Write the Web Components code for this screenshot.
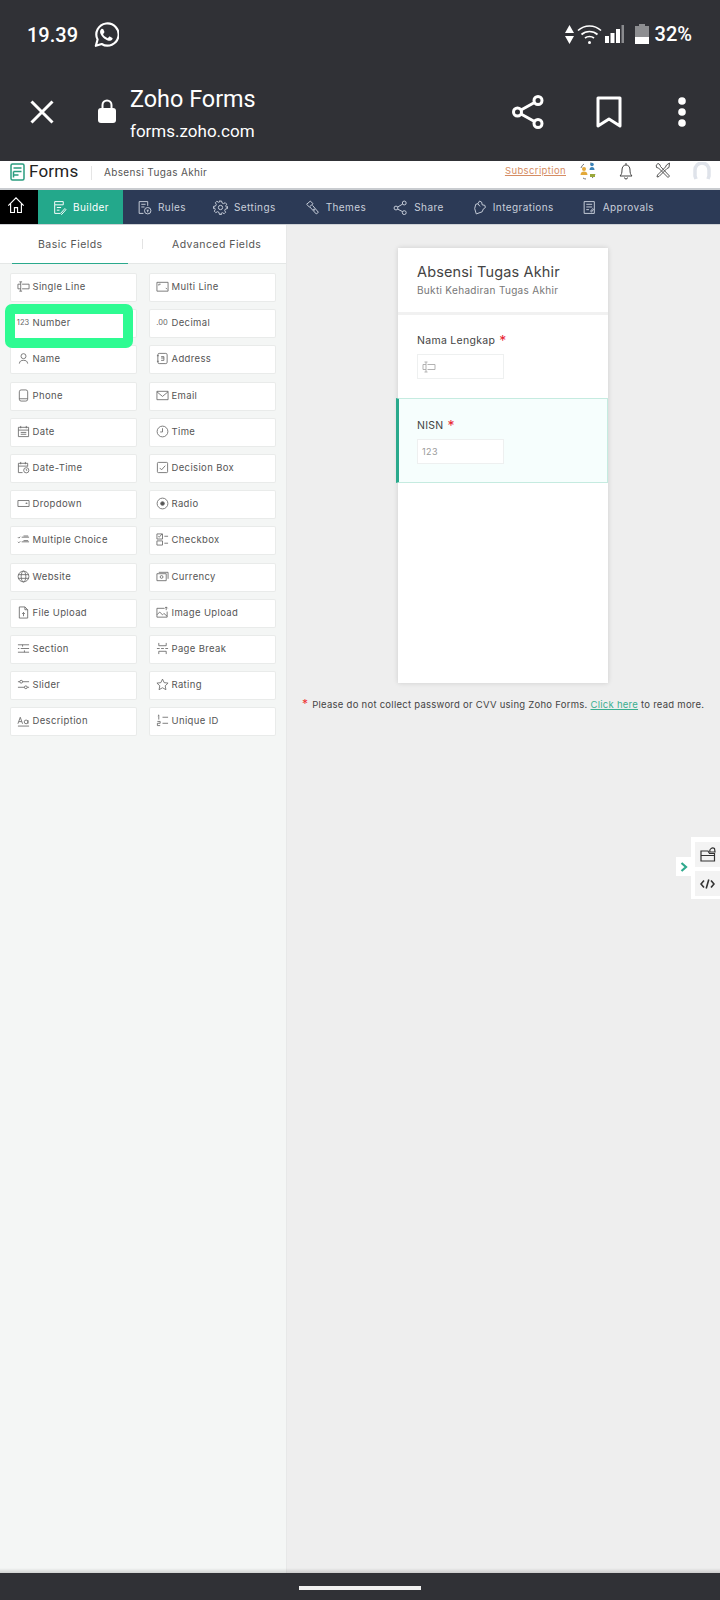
<!DOCTYPE html>
<html>
<head>
<meta charset="utf-8">
<title>Zoho Forms</title>
<style>
  html, body { margin: 0; padding: 0; }
  body {
    width: 720px; height: 1600px; overflow: hidden;
    display: flex; flex-direction: column;
    font-family: Inter, "Liberation Sans", sans-serif;
  }
</style>
</head>
<body>
  <browser-bar></browser-bar>
  <app-header></app-header>
  <app-nav>
    <nav-item icon="home" home></nav-item>
    <nav-item icon="builder" active>Builder</nav-item>
    <nav-item icon="rules">Rules</nav-item>
    <nav-item icon="settings">Settings</nav-item>
    <nav-item icon="themes">Themes</nav-item>
    <nav-item icon="share">Share</nav-item>
    <nav-item icon="integrations">Integrations</nav-item>
    <nav-item icon="approvals">Approvals</nav-item>
  </app-nav>
  <main-area>
    <field-panel>
      <field-tile icon="single">Single Line</field-tile>
      <field-tile icon="multi">Multi Line</field-tile>
      <field-tile icon="number" marked>Number</field-tile>
      <field-tile icon="decimal">Decimal</field-tile>
      <field-tile icon="name">Name</field-tile>
      <field-tile icon="address">Address</field-tile>
      <field-tile icon="phone">Phone</field-tile>
      <field-tile icon="email">Email</field-tile>
      <field-tile icon="date">Date</field-tile>
      <field-tile icon="time">Time</field-tile>
      <field-tile icon="datetime">Date-Time</field-tile>
      <field-tile icon="decision">Decision Box</field-tile>
      <field-tile icon="dropdown">Dropdown</field-tile>
      <field-tile icon="radio">Radio</field-tile>
      <field-tile icon="choice">Multiple Choice</field-tile>
      <field-tile icon="checkbox">Checkbox</field-tile>
      <field-tile icon="website">Website</field-tile>
      <field-tile icon="currency">Currency</field-tile>
      <field-tile icon="file">File Upload</field-tile>
      <field-tile icon="image">Image Upload</field-tile>
      <field-tile icon="section">Section</field-tile>
      <field-tile icon="pagebreak">Page Break</field-tile>
      <field-tile icon="slider">Slider</field-tile>
      <field-tile icon="rating">Rating</field-tile>
      <field-tile icon="description">Description</field-tile>
      <field-tile icon="unique">Unique ID</field-tile>
    </field-panel>
    <form-canvas>
      <form-field label="Nama Lengkap" icon="single"></form-field>
      <form-field label="NISN" icon="number" active></form-field>
    </form-canvas>
  </main-area>
  <home-bar></home-bar>

<script>
// 字段图标，全部 14x14 的线条图
const ICONS = {
  home: '<path d="M1 7.500 7 1.500l6 6M2.800 6v6.800h3V9h2.400v3.800h3V6"/>',
  builder: '<path d="M2.500 1.500h8v3h-8zM2.500 4.500v8h5M4.500 7h4M4.500 9.500h2.500M8 12.500l4-4.500 1 1-4 4.500z"/>',
  rules: '<path d="M2 1.500h8v4M2 1.500v11h4M4 4h4M4 6.500h3"/><circle cx="10" cy="10" r="3"/><path d="M9 9.500h2M10 9.500v2"/>',
  settings: '<circle cx="7" cy="7" r="2"/><path d="M6 1h2l.4 1.700 1.500.7 1.500-.9 1.400 1.400-.9 1.500.7 1.500L13.500 6v2l-1.900.4-.7 1.500.9 1.500-1.400 1.400-1.500-.9-1.500.7L8 13.500H6l-.4-1.900-1.500-.7-1.500.9-1.400-1.400.9-1.500-.7-1.500L.5 8V6l1.900-.4.7-1.500-.9-1.500 1.400-1.400 1.500.9 1.500-.7z"/>',
  themes: '<path d="M1.500 4 5 1l2.500 2.500-3.500 3zM4.500 6.500l6 6.500 2-1.500-5.500-6.500"/><circle cx="8.500" cy="9" r=".6"/>',
  share: '<circle cx="10.500" cy="2.800" r="1.800"/><circle cx="2.800" cy="7.500" r="1.800"/><circle cx="10.500" cy="11.800" r="1.800"/><path d="M9 3.800 4.300 6.600M4.300 8.500 9 10.900"/>',
  integrations: '<path d="M4 13 2.500 8l1-4 2-.5L7 1l2 1 .5 2.500L12 5l.5 2-2 1.500-1 2.500z"/><path d="M5.500 3.500 7.500 6"/>',
  approvals: '<path d="M2 1.500h9.500v11H2zM4 4h5.500M4 6.500h5.500M4 9h2.500M8 10.500l2-2.500.8.800-2 2.500z"/>',
  single: '<path d="M4 2v10M2.500 2h3M2.500 12h3M4 4.500H1v5h3M5.500 4.500H13v5H5.500"/>',
  multi: '<path d="M1 2.500h12v9.500H1zM3 4.500v1.500M3 4.500h2M10.500 8.500l1.500 1.500"/>',
  decimal: '',
  name: '<circle cx="7" cy="4.500" r="2.700"/><path d="M2.500 12.500c.5-3 2-3.500 4.500-3.500s4 .5 4.500 3.500"/>',
  address: '<rect x="2" y="1.500" width="10" height="11" rx="1.500"/><path d="M1 4h2M1 10h2M5.500 5h3v1.500h-3M8.500 6.500V9h-3"/>',
  phone: '<rect x="2.500" y="1" width="9" height="12" rx="2"/><path d="M2.500 10.500h9"/>',
  email: '<path d="M1 2.500h12v9H1zM1 3l6 5 6-5"/>',
  date: '<path d="M1.500 2.500h11v10h-11zM1.500 5.500h11M4 1v2.500M10 1v2.500M4 8h6M4 10h6"/>',
  time: '<circle cx="7" cy="7" r="5.800"/><path d="M7 3.500V7.500H4.500"/>',
  datetime: '<path d="M6 12.500H1.500v-10h10V6M1.500 5.500h10M4 1v2.500M9 1v2.500"/><circle cx="10" cy="10" r="2.800"/><path d="M10 8.700V10h1"/>',
  decision: '<rect x="1.500" y="1.500" width="11" height="11" rx="1"/><path d="M4 7.500l2 2 4-4.500"/>',
  dropdown: '<path d="M1 3.800h12v6.400H1zM9.500 6.500h1.500L10.250 7.500z"/>',
  radio: '<circle cx="7" cy="7" r="5.800"/><circle cx="7" cy="7" r="2" fill="#555"/>',
  choice: '<path d="M1 4.500l1 1 1.500-1.500M1 9.500l1 1 1.500-1.500M5 4.500h8M5 9.500h8M7 3.200h5M7 8.200h5"/>',
  checkbox: '<path d="M1 1h6v5.500H1zM2.500 3.500l1 1 3-3.500M1 8.500h6V13H1zM9 3.500h4M9 11h4"/>',
  website: '<circle cx="7" cy="7" r="5.800"/><ellipse cx="7" cy="7" rx="2.500" ry="5.800"/><path d="M1.200 5h11.600M1.200 9h11.600"/>',
  currency: '<path d="M1 4h10v7.500H1zM3 2.500h10v7"/><circle cx="6" cy="7.500" r="1.500"/>',
  file: '<path d="M2.500 1h6l3 3v9h-9zM8.500 1v3h3M7 11V7M5.500 8.500 7 7l1.500 1.500"/>',
  image: '<path d="M9 2.500H1v9.500h11V6M1 9.500 4 6.500l3 3 1.500-1.500 3.500 3M11 1v3.500M9.500 2.500 11 1l1.500 1.500"/>',
  section: '<path d="M1 3h12M4 7h9M1 7h1.500M1 11h12M6 3v2M8 9v2"/>',
  pagebreak: '<path d="M3 1v3h8V1M3 13v-3h8v3M1 7h3M5.500 7h3M10 7h3"/>',
  slider: '<path d="M1 4h12M1 10h12"/><circle cx="4.500" cy="4" r="1.500" fill="#fff"/><circle cx="9.500" cy="10" r="1.500" fill="#fff"/>',
  rating: '<path d="M7 1.200l1.800 3.800 4.200.5-3.100 2.900.8 4.200L7 10.500l-3.700 2.100.8-4.200L1 5.500 5.200 5z"/>',
  description: '<path d="M1 13h12M1 10.500 3.500 3.500 6 10.500M2 8.200h3"/><circle cx="9.800" cy="8.500" r="2"/><path d="M11.800 6.500v4"/>',
  unique: '<path d="M3 1v5M2 2l1-1M1.500 8h3v2h-3v2.500h3M7 3.500h6M7 10h6"/>',
}
const TEXT_ICONS = { number: '123', decimal: '.00' }

function iconMarkup(name, size = 14) {
  if (TEXT_ICONS[name]) return `<span class="txt-icon">${TEXT_ICONS[name]}</span>`
  return `<svg width="${size}" height="${size}" viewBox="0 0 14 14" fill="none" stroke="currentColor" stroke-width=".9">${ICONS[name] || ''}</svg>`
}

// 创建组件的小工具：把样式和结构写进 open 的影子根
function shadow(el, html) {
  el.attachShadow({ mode: 'open' })
  el.shadowRoot.innerHTML = html
}

class BrowserBar extends HTMLElement {
  constructor() {
    super()
    shadow(this, `
    <style>
      :host { display: block; height: 161px; background: #303136; color: #fff; font-family: Roboto, sans-serif; }
      .status { height: 68px; display: flex; align-items: center; padding: 0 28px 0 27px; font-size: 20px; font-weight: 500; box-sizing: border-box; }
      .time { margin: 1px 15px 0 0; }
      .spacer { flex: 1; }
      .st { display: flex; align-items: center; }
      .url { height: 93px; display: flex; align-items: flex-start; }
      .close { margin: 32px 0 0 30px; width: 24px; height: 24px; }
      .lock { margin: 31px 0 0 43px; }
      .title { margin: 16px 0 0 13px; width: 300px; }
      .title b { display: block; font-weight: 400; font-size: 23.400px; line-height: 30px; }
      .title span { display: block; font-size: 17px; line-height: 22px; margin-top: 6px; }
      .sh { margin: 26px 0 0 0; position: absolute; left: 511px; }
      .bm { position: absolute; left: 596px; margin-top: 28px; }
      .dots { position: absolute; left: 677px; margin-top: 29px; }
    </style>
    <div class="status">
      <span class="time">19.39</span>
      <svg width="26" height="27" viewBox="0 0 24 25" fill="none">
        <path d="M2.600 23l1.600-5.800A10.300 10.300 0 1 1 8 21.300z" stroke="#fff" stroke-width="2" stroke-linejoin="round"/>
        <path fill="#fff" d="M8.500 7.200c-.3 0-.7.1-1 .5-.4.500-1 1.200-1 2.600s1 2.800 1.200 3c.1.200 2 3.100 4.900 4.300 2.400 1 2.900.800 3.400.700.500 0 1.700-.700 1.900-1.300.2-.700.2-1.200.2-1.300-.1-.1-.3-.2-.6-.3l-2-1c-.3-.1-.5-.1-.7.200l-.9 1.100c-.2.200-.3.200-.6.100-.3-.2-1.200-.5-2.300-1.400-.9-.8-1.400-1.700-1.600-2-.2-.3 0-.5.100-.6l.7-.8c.1-.2.200-.3.300-.5 0-.2 0-.4 0-.5l-.9-2.200c-.2-.5-.5-.5-.7-.5z"/>
      </svg>
      <span class="spacer"></span>
      <span class="st">
        <svg width="9" height="19" viewBox="0 0 9 19" style="margin-right:3px"><path fill="#fff" d="M4.500 0 9 8H0zM0 11h9l-4.500 8z"/></svg>
        <svg width="25" height="24" viewBox="0 0 25 24" fill="none" stroke="#fff" stroke-width="1.700" style="margin-right:3px">
          <path d="M1 8.500c6.500-6 16.500-6 23 0M4.500 12.500c4.500-4 11.500-4 16 0M8 16c2.500-2 6.500-2 9 0"/>
          <circle cx="12.500" cy="20.500" r="1.500" fill="#fff" stroke="none"/>
        </svg>
        <svg width="20" height="20" viewBox="0 0 20 20" style="margin-right:10px">
          <path fill="#fff" d="M0 12h4v7H0zM5.500 9h4v10h-4zM11 5h4v14h-4z"/><path fill="#8a8b8e" d="M16.500 1H19v18h-2.500z"/>
        </svg>
        <svg width="14" height="20" viewBox="0 0 14 20" style="margin-right:6px">
          <path fill="#8d8e91" d="M4 0h6v2h4v12H0V2h4z"/><path fill="#fff" d="M0 13h14v7H0z"/>
        </svg>
        <span>32%</span>
      </span>
    </div>
    <div class="url">
      <svg class="close" viewBox="0 0 24 24" stroke="#fff" stroke-width="3"><path d="M1.500 1.500l21 21M22.500 1.500l-21 21"/></svg>
      <svg class="lock" width="20" height="24" viewBox="0 0 20 24" fill="none"><path d="M5.500 10V6a4.500 4.500 0 0 1 9 0v4" stroke="#fff" stroke-width="2"/><rect x="1" y="9" width="18" height="15" rx="3" fill="#fff"/></svg>
      <div class="title"><b>Zoho Forms</b><span>forms.zoho.com</span></div>
      <svg class="sh" width="34" height="36" viewBox="0 0 34 36" fill="none" stroke="#fff" stroke-width="3">
        <circle cx="27" cy="6.500" r="4"/><circle cx="6.500" cy="18" r="4"/><circle cx="27" cy="29.500" r="4"/>
        <path d="M23.500 8.500 10 16M10 20l13.500 7.500"/>
      </svg>
      <svg class="bm" width="26" height="33" viewBox="0 0 26 33" fill="none" stroke="#fff" stroke-width="3"><path d="M2 2h22v28l-11-7-11 7z" stroke-linejoin="round"/></svg>
      <svg class="dots" width="10" height="30" viewBox="0 0 10 30" fill="#fff"><circle cx="5" cy="4" r="3.800"/><circle cx="5" cy="15" r="3.800"/><circle cx="5" cy="26" r="3.800"/></svg>
    </div>`)
  }
}

class AppHeader extends HTMLElement {
  constructor() {
    super()
    shadow(this, `
    <style>
      :host { display: flex; align-items: center; height: 27px; background: #fff; border-bottom: 2px solid #c9ccd0; color: #333; position: relative; }
      .logo { margin: -6px 0 0 10px; }
      .brand { font-size: 17px; margin: -8px 0 0 4px; color: #222; font-family: Roboto, sans-serif; letter-spacing: .2px; width: 50px; }
      .sep { width: 1px; height: 14px; background: #e5e5e5; margin: -4px 0 0 12px; }
      .form { font-size: 10px; margin: -5px 0 0 12px; color: #555; letter-spacing: .35px; flex: 1; }
      .sub { font-size: 9.500px; color: #d58c63; text-decoration: underline; letter-spacing: .38px; margin: -8px 13px 0 0; }
      .ic { margin-top: -8px; }
    </style>
    <svg class="logo" width="15" height="18" viewBox="0 0 15 18" fill="none" stroke="#2a9d7f" stroke-width="1.500">
      <rect x="1" y="1" width="13" height="16" rx="1.500"/><path d="M3.500 5h8M3.500 8.500h8M3.500 8.500v6M3.500 12h5"/>
    </svg>
    <span class="brand">Forms</span>
    <span class="sep"></span>
    <span class="form">Absensi Tugas Akhir</span>
    <span class="sub">Subscription</span>
    <svg class="ic" width="18" height="20" viewBox="0 0 18 20" style="margin-right:22px" fill="none">
      <path d="M5 3a7 7 0 0 0-3 4M13 17a7 7 0 0 0 3-4M7 18c-1 0-2-.3-3-1M11 2c1 0 2 .3 3 1" stroke="#555" stroke-width=".8"/>
      <circle cx="5" cy="8" r="2" fill="#e3a93a"/><path d="M1.500 14c0-2.500 1.500-3.500 3.500-3.500s3.500 1 3.500 3.500z" fill="#e3a93a"/>
      <circle cx="13" cy="3.500" r="1.800" fill="#3b83b8"/><path d="M10.500 9c0-2 1-3 2.500-3s2.500 1 2.500 3z" fill="#3b83b8"/>
      <path d="M11 13h5v3h-5z" fill="#9aa83a"/>
    </svg>
    <svg class="ic" width="14" height="18" viewBox="0 0 14 18" style="margin-right:22px" fill="none" stroke="#444"><path d="M1 14h12c-1.500-1.500-2-3-2-6S9.500 3 7 3 3 5 3 8s-.5 4.500-2 6zM7 1v2M5.500 15.500a1.500 1.500 0 0 0 3 0"/></svg>
    <svg class="ic" width="16" height="17" viewBox="0 0 16 17" style="margin-right:21px" fill="none" stroke="#555"><path d="M3 1.500a3 3 0 0 0-1.500 4l2 .5L13 15.500 14.500 14 5.500 4.500 5 3a3 3 0 0 0-2-1.500zM14.500 1l-3 2-1 2-8 8-.5 2 2-.5 8-8 2-1z"/></svg>
    <svg class="ic" width="20" height="18" viewBox="0 0 20 18" style="margin-right:8px" fill="none" stroke="#dfe3ea" stroke-width="3.500"><path d="M4 17l-1-3V8a7 7 0 0 1 14 0v6l-1 3"/></svg>`)
  }
}

class AppNav extends HTMLElement {
  constructor() {
    super()
    shadow(this, `
    <style>
      :host { display: flex; height: 34px; background: #2c3a56; border-bottom: 1px solid #cfd2d6; }
    </style>
    <slot></slot>`)
  }
}

class NavItem extends HTMLElement {
  constructor() {
    super()
    const name = this.getAttribute('icon')
    shadow(this, `
    <style>
      :host { display: flex; align-items: center; gap: 6px; color: #c9cfdb; font-size: 10px; letter-spacing: .42px; }
      :host([home]) { background: #000; width: 38px; justify-content: center; color: #fff; }
      :host([active]) { background: #23a88b; color: #fff; width: 85px; padding-left: 14px; box-sizing: border-box; margin-right: 14px; }
      svg { display: block; }
      :host([home]) svg { margin-top: -4px; }
    </style>
    ${iconMarkup(name, this.hasAttribute('home') ? 18 : 15)}
    <span><slot></slot></span>`)
    // 导航项之间的距离按文字实际宽度来配
    const after = { rules: 27, settings: 29, themes: 27, share: 28, integrations: 28 }[name]
    if (after) this.style.marginRight = after + 'px'
  }
}

class MainArea extends HTMLElement {
  constructor() {
    super()
    shadow(this, `
    <style>
      :host { display: flex; flex: 1; min-height: 0; position: relative; }
      :host::after { content: ''; position: absolute; left: 0; right: 0; bottom: 0; height: 5px; background: linear-gradient(rgba(0,0,0,0), rgba(0,0,0,.14)); }
    </style>
    <slot></slot>`)
  }
}

class FieldPanel extends HTMLElement {
  constructor() {
    super()
    shadow(this, `
    <style>
      :host { display: block; width: 287px; background: #f4f6f5; border-right: 1px solid #e7e8e8; box-sizing: border-box; }
      .tabs { height: 39px; background: #fff; display: flex; align-items: center; position: relative; font-size: 10.500px; letter-spacing: .45px; color: #555; border-bottom: 1px solid #e4e7e6; box-sizing: border-box; }
      .tabs span { position: absolute; }
      .basic { left: 38px; } .adv { left: 172px; }
      .sep { left: 142px; width: 1px; height: 10px; background: #e3e3e3; }
      .line { left: 12px; width: 116px; bottom: -1px; height: 1px; background: #2aa98c; }
      .grid { display: grid; grid-template-columns: 125.500px 125px; column-gap: 13.500px; row-gap: 9.200px; grid-auto-rows: 27px; padding: 10px 0 0 10.500px; }
    </style>
    <div class="tabs">
      <span class="basic">Basic Fields</span><span class="sep"></span><span class="adv">Advanced Fields</span><span class="line"></span>
    </div>
    <div class="grid"><slot></slot></div>`)
  }
}

class FieldTile extends HTMLElement {
  constructor() {
    super()
    shadow(this, `
    <style>
      :host { display: block; position: relative; background: #fff; box-shadow: 0 0 0 1px #e9ebea; border-radius: 1px; font-size: 9.500px; letter-spacing: .36px; color: #555; }
      :host([marked]) { z-index: 2; }
      .body { position: relative; display: flex; align-items: center; height: 27px; margin-top: -1px; }
      .ico { width: 13px; display: flex; justify-content: center; margin: 0 3px 0 6px; color: #666; }
      .txt-icon { font-size: 7.500px; letter-spacing: 0; color: #666; white-space: nowrap; }
      .mark { position: absolute; left: -5.500px; top: -6px; width: 108px; height: 24px; border: 10px solid #2efb92; border-radius: 7px; background: #fff; background-clip: padding-box; }
      svg { display: block; }
    </style>
    ${this.hasAttribute('marked') ? '<div class="mark"></div>' : ''}
    <div class="body"><span class="ico">${iconMarkup(this.getAttribute('icon'), 13)}</span><span><slot></slot></span></div>`)
  }
}

class FormCanvas extends HTMLElement {
  constructor() {
    super()
    shadow(this, `
    <style>
      :host { display: block; flex: 1; background: #eeeeee; position: relative; }
      .card { width: 210px; height: 435px; margin: 23px 0 0 111px; background: #fff; box-shadow: 0 0 5px rgba(0,0,0,.14); }
      .head { padding: 14px 0 0 19px; box-sizing: border-box; border-bottom: 3px solid #f1f1f1; height: 67px; }
      .head b { display: block; font-weight: 400; font-size: 14.500px; letter-spacing: .15px; color: #444; line-height: 20px; }
      .head span { display: block; font-size: 10px; letter-spacing: .32px; color: #777; line-height: 14px; margin-top: 1px; }
      .note { margin: 13px 0 0 15px; font-size: 9.500px; letter-spacing: .26px; color: #444; white-space: nowrap; }
      .note i { color: #e33; font-style: normal; font-size: 12px; margin-right: 1px; }
      .note a { color: #3aae90; text-decoration: underline; }
      .dock { position: absolute; top: 612px; left: 404px; width: 29px; height: 62px; background: #fff; padding: 5px 0 0 4px; box-sizing: border-box; }
      .tile { width: 25px; height: 25px; background: #f3f3f3; display: flex; align-items: center; justify-content: center; margin-bottom: 4px; }
      .tog { position: absolute; top: 632px; left: 389px; width: 15px; height: 19px; background: #fff; display: flex; align-items: center; justify-content: center; }
    </style>
    <div class="card">
      <div class="head"><b>Absensi Tugas Akhir</b><span>Bukti Kehadiran Tugas Akhir</span></div>
      <slot></slot>
    </div>
    <div class="note"><i>*</i> Please do not collect password or CVV using Zoho Forms. <a>Click here</a> to read more.</div>
    <div class="tog"><svg width="8" height="10" viewBox="0 0 8 10" fill="none" stroke="#2ea98d" stroke-width="2.200"><path d="M1.500 1 6 5 1.500 9"/></svg></div>
    <div class="dock">
      <div class="tile"><svg width="16" height="15" viewBox="0 0 16 15" fill="none" stroke="#333" stroke-width="1.200"><path d="M1 4h7l1.500 2.500h5V14H1zM1 8.500h13"/><path d="M10 5a3 3 0 0 1 4.500-3.500L15 5z"/></svg></div>
      <div class="tile"><svg width="15" height="10" viewBox="0 0 15 10" fill="none" stroke="#333" stroke-width="1.600"><path d="M4 1.500 1 5l3 3.500M11 1.500 14 5l-3 3.500M8.800.500 6.200 9.500"/></svg></div>
    </div>`)
  }
}

class FormField extends HTMLElement {
  constructor() {
    super()
    shadow(this, `
    <style>
      :host { display: block; height: 83px; padding: 18px 0 0 19px; box-sizing: border-box; color: #444; font-size: 10.500px; letter-spacing: .3px; position: relative; }
      :host([active]) { height: 85px; margin-left: -2px; padding: 19px 0 0 18px; background: #f6fefd; border: 1px solid #c5ebe0; border-left: 3px solid #2aa98c; }
      .lb { line-height: 16px; height: 16px; display: flex; gap: 4px; }
      .lb i { color: #e8232f; font-style: normal; font-size: 14px; line-height: 15px; }
      .inp { width: 87px; height: 25px; margin-top: 5px; background: #fff; box-sizing: border-box; border: 1px solid #eef0f0; display: flex; align-items: center; padding-left: 4px; color: #aaa; }
      .txt-icon { font-size: 9px; letter-spacing: .4px; color: #999; }
      svg { display: block; }
    </style>
    <div class="lb"><span>${this.getAttribute('label')}</span><i>*</i></div>
    <div class="inp">${iconMarkup(this.getAttribute('icon'), 14)}</div>`)
  }
}

class HomeBar extends HTMLElement {
  constructor() {
    super()
    shadow(this, `
    <style>
      :host { display: flex; justify-content: center; height: 27px; background: #303136; }
      div { width: 122px; height: 4px; margin-top: 13px; background: #f1f1f1; }
    </style>
    <div></div>`)
  }
}

customElements.define('browser-bar', BrowserBar)
customElements.define('app-header', AppHeader)
customElements.define('app-nav', AppNav)
customElements.define('nav-item', NavItem)
customElements.define('main-area', MainArea)
customElements.define('field-panel', FieldPanel)
customElements.define('field-tile', FieldTile)
customElements.define('form-canvas', FormCanvas)
customElements.define('form-field', FormField)
customElements.define('home-bar', HomeBar)
</script>
</body>
</html>
